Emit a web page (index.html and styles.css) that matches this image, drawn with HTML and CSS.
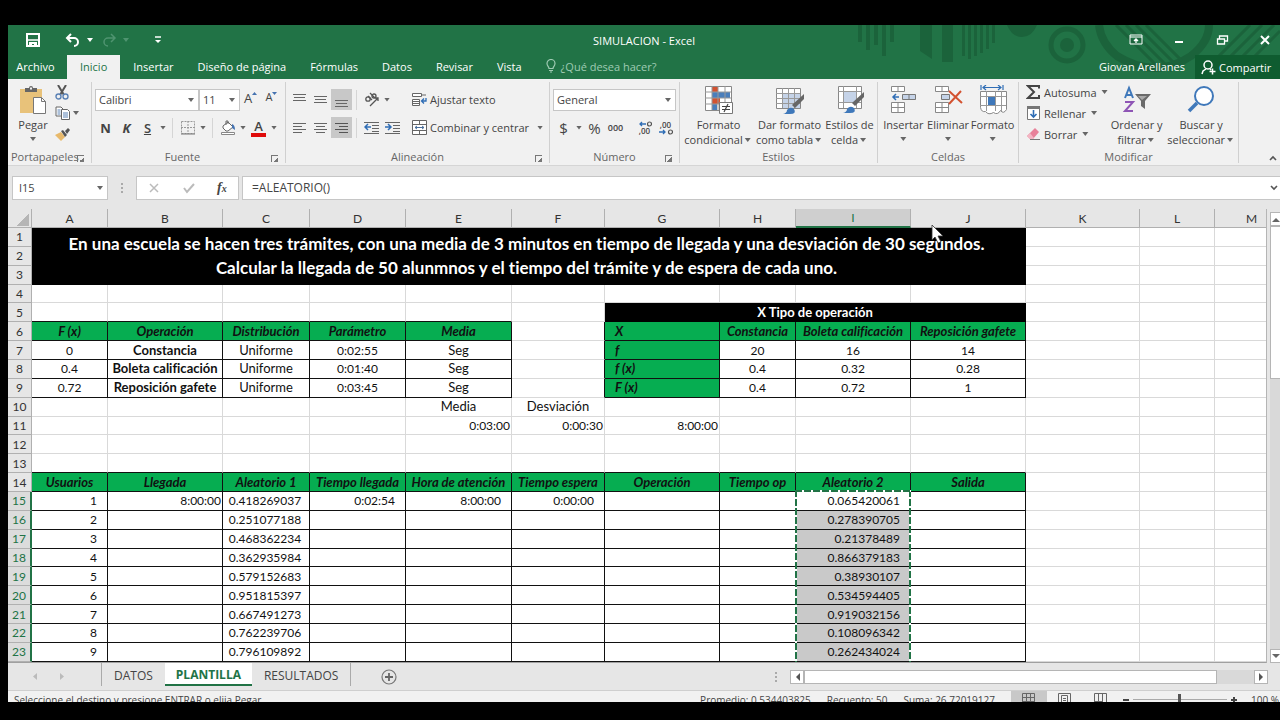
FILE: index.html
```html
<!DOCTYPE html>
<html lang="es">

<head>
  <meta charset="UTF-8">
  <meta name="viewport" content="width=device-width, initial-scale=1.0">
  <title>SIMULACION - Excel</title>
  <link rel="stylesheet" href="styles.css">
</head>

<body>
  <div class="app">

    <header class="top">
      <svg class="pattern" width="430" height="54" viewBox="0 0 430 54">
        <g fill="#1b633b">
          <path d="M8 0h4v17h-4zM16 0h4v25h-4zM24 0h4v20h-4zM32 0h4v31h-4zM40 0h4v17h-4zM70 0h12v34l-12-8zM92 0h11v37h-11zM112 0h3v31h-3zM118 0h3v34h-3zM124 0h3v31h-3zM130 0h3v28h-3zM136 0h3v24h-3zM142 0h3v18h-3z" />
          <path d="M157 0h30q-5 12-15 12t-15-12z" />
          <circle cx="217" cy="20" r="7" />
        </g>
        <g fill="none" stroke="#1b633b">
          <circle cx="217" cy="20" r="16" stroke-width="5" />
          <path d="M249 0q2 18 18 31q38 24 74 0q18-14 18-31" stroke-width="8" />
          <path d="M266 0l46 46M276 0l46 46M286 0l42 42M296 0l36 36M380 32l32-32M392 32l32-32M404 32l26-26M368 32l32-32" stroke-width="3" />
        </g>
      </svg>

      <div class="titlebar">
        <div class="quick">
          <button class="save" aria-label="Guardar"><svg width="14" height="14" viewBox="0 0 14 14"><path d="M1 1h12v12H1z" fill="none" stroke="#fff" stroke-width="2" /><path d="M2 7h10" stroke="#fff" stroke-width="1.5" /><path d="M3 9h8v4H8v-2H6v2H3z" fill="#fff" /></svg></button>
          <button aria-label="Deshacer"><svg width="16" height="14" viewBox="0 0 16 14"><path d="M6 1L2 5l4 4M2 5h7a4 4 0 0 1 0 8" fill="none" stroke="#fff" stroke-width="2" /></svg></button>
          <span class="caret white"></span>
          <button class="redo" aria-label="Rehacer"><svg width="16" height="14" viewBox="0 0 16 14"><path d="M10 1l4 4-4 4M14 5H7a4 4 0 0 0 0 8" fill="none" stroke="#4f9470" stroke-width="1.5" /></svg></button>
          <span class="caret faded"></span>
          <button class="more" aria-label="Personalizar"><svg width="6" height="8" viewBox="0 0 6 8"><path d="M0 1h6" stroke="#fff" stroke-width="1.5" /><path d="M0 4h6L3 7z" fill="#fff" /></svg></button>
        </div>
        <div class="doc-title">SIMULACION - Excel</div>
        <div class="window-buttons">
          <button aria-label="Opciones de cinta"><svg width="14" height="12" viewBox="0 0 14 12"><path d="M1 1h12v9H1zM1 3h12" fill="none" stroke="#fff" /><path d="M7 9V5M5 7l2-2 2 2" fill="none" stroke="#fff" stroke-width="1.3" /></svg></button>
          <button aria-label="Minimizar"><svg width="14" height="12" viewBox="0 0 14 12"><path d="M3 8h8" stroke="#fff" stroke-width="2" /></svg></button>
          <button aria-label="Restaurar"><svg width="14" height="12" viewBox="0 0 14 12"><path d="M2.500 5h7v5h-7zM4.500 5V2h8v5h-3" fill="none" stroke="#fff" stroke-width="1.3" /></svg></button>
          <button aria-label="Cerrar"><svg width="14" height="12" viewBox="0 0 14 12"><path d="M3 2l8 8M11 2l-8 8" stroke="#fff" stroke-width="2" /></svg></button>
        </div>
      </div>

      <nav class="tabs">
        <button class="tab file">Archivo</button>
        <button class="tab active">Inicio</button>
        <button class="tab">Insertar</button>
        <button class="tab">Diseño de página</button>
        <button class="tab">Fórmulas</button>
        <button class="tab">Datos</button>
        <button class="tab">Revisar</button>
        <button class="tab">Vista</button>
        <button class="tab tell"><svg width="10" height="14" viewBox="0 0 10 14"><path d="M3 9.500C3 7.500 1 7 1 4.500a4 4 0 0 1 8 0C9 7 7 7.500 7 9.500zM3 11.500h4M4 13h2" fill="none" stroke="#9fcbb3" stroke-width="1.2" /></svg>¿Qué desea hacer?</button>
        <span class="user">Giovan Arellanes</span>
        <button class="share"><svg width="15" height="15" viewBox="0 0 15 15"><circle cx="7" cy="5" r="4" fill="none" stroke="#fff" stroke-width="1.5" /><path d="M1 14l1-3 3-2M9 9l1 1M11.500 8.500v6M8.500 11.500h6" fill="none" stroke="#fff" stroke-width="1.5" /></svg>Compartir</button>
      </nav>
    </header>

    <section class="ribbon">
      <div class="group clipboard">
        <div class="tools">
          <button class="big paste">
            <svg width="28" height="30" viewBox="0 0 28 30"><path d="M1 4h22v24H1z" fill="#e8c27a" /><path d="M6 7V3h4a2 2 0 0 1 4 0h4v4z" fill="#666" /><path d="M11 2.500h2v2h-2z" fill="#f1f1f1" /><path d="M14.500 12.500h8l4 4v12h-12z" fill="#fff" stroke="#777" /><path d="M22.500 12.500v4h4" fill="none" stroke="#777" /></svg>
            Pegar<span class="caret"></span>
          </button>
          <div class="stack">
            <button aria-label="Cortar"><svg width="14" height="15" viewBox="0 0 14 15"><path d="M3 0l6 10M11 0L5 10" stroke="#555" stroke-width="2" /><circle cx="3.500" cy="11.500" r="2.500" fill="none" stroke="#5b82b5" stroke-width="1.400" /><circle cx="10.500" cy="11.500" r="2.500" fill="none" stroke="#5b82b5" stroke-width="1.400" /></svg></button>
            <button aria-label="Copiar"><svg width="16" height="14" viewBox="0 0 16 14"><path d="M1 1h5l2 2v7H1z" fill="#fff" stroke="#666" /><path d="M2.500 4h3M2.500 6h3M2.500 8h3" stroke="#5b82b5" /><path d="M6.500 3.500h6l2 2v8h-8z" fill="#fff" stroke="#666" /><path d="M8 7h5M8 9h5M8 11h5" stroke="#5b82b5" /></svg><span class="caret"></span></button>
            <button aria-label="Copiar formato"><svg width="15" height="13" viewBox="0 0 15 13"><path d="M0 7l6-3 4 5-4 4z" fill="#e8b96b" /><path d="M6 3l2-1 4 5-2 2zM10 3l3-3 2 2-3 4z" fill="#555" /></svg></button>
          </div>
        </div>
        <div class="group-name">Portapapeles<i class="launcher"></i></div>
      </div>

      <div class="group font">
        <div class="tools rows">
          <div class="row">
            <select class="pick family" aria-label="Fuente"><option>Calibri</option></select>
            <select class="pick size" aria-label="Tamaño"><option>11</option></select>
            <button class="tool grow" aria-label="Aumentar">A<svg width="5" height="4" viewBox="0 0 5 4"><path d="M0 3l2.500-3L5 3z" fill="#4472b0" /></svg></button>
            <button class="tool shrink" aria-label="Disminuir">A<svg width="5" height="4" viewBox="0 0 5 4"><path d="M0 0h5L2.500 3z" fill="#4472b0" /></svg></button>
          </div>
          <div class="row">
            <button class="tool bold">N</button>
            <button class="tool italic">K</button>
            <button class="tool under">S</button>
            <span class="caret"></span><i class="sep"></i>
            <button class="tool" aria-label="Bordes"><svg width="14" height="14" viewBox="0 0 14 14"><path d="M.5.5h13v12H.5zM7 0v13M0 6.500h14" fill="none" stroke="#999" stroke-dasharray="2 1" /><path d="M0 13h14" stroke="#777" /></svg></button>
            <span class="caret"></span><i class="sep"></i>
            <button class="tool" aria-label="Relleno"><svg width="16" height="15" viewBox="0 0 16 15"><path d="M3 6l5-4 5 5-5 4H6L3 8z" fill="#fff" stroke="#666" /><path d="M6 5V1h2v3" fill="none" stroke="#666" /><path d="M12 4q3 1 3 6l-3-2z" fill="#4472b0" /><path d="M1.500 12.500h13v2h-13z" fill="#fff" stroke="#888" /></svg></button>
            <span class="caret"></span>
            <button class="tool color">A</button>
            <span class="caret"></span>
          </div>
        </div>
        <div class="group-name">Fuente<i class="launcher"></i></div>
      </div>

      <div class="group align">
        <div class="tools">
          <div class="rows">
            <div class="row">
              <button class="tool" aria-label="Arriba"><svg width="13" height="14" viewBox="0 0 13 14"><path d="M0 1.500h13M1 4.500h11M0 7.500h13" stroke="#666" /></svg></button>
              <button class="tool" aria-label="Medio"><svg width="13" height="14" viewBox="0 0 13 14"><path d="M0 3.500h13M1 6.500h11M0 9.500h13" stroke="#666" /></svg></button>
              <button class="tool on" aria-label="Abajo"><svg width="13" height="14" viewBox="0 0 13 14"><path d="M0 7.500h13M1 10.500h11M0 13.500h13" stroke="#666" /></svg></button>
              <i class="sep"></i>
              <button class="tool" aria-label="Orientación"><svg width="16" height="15" viewBox="0 0 16 15"><g fill="none" stroke="#555" stroke-width="1.300"><circle cx="4" cy="7" r="2.200" /><path d="M4 4l4 4" /><path d="M6 1l5 5" /><circle cx="10" cy="4" r="2" /><path d="M6 14l8-8M11 6h3v3" /></g></svg></button>
              <span class="caret"></span>
            </div>
            <div class="row">
              <button class="tool" aria-label="Izquierda"><svg width="13" height="12" viewBox="0 0 13 12"><path d="M0 1.500h13M0 4.500h9M0 7.500h13M0 10.500h9" stroke="#666" /></svg></button>
              <button class="tool" aria-label="Centrar"><svg width="13" height="12" viewBox="0 0 13 12"><path d="M0 1.500h13M2 4.500h9M0 7.500h13M2 10.500h9" stroke="#666" /></svg></button>
              <button class="tool on" aria-label="Derecha"><svg width="13" height="12" viewBox="0 0 13 12"><path d="M0 1.500h13M4 4.500h9M0 7.500h13M4 10.500h9" stroke="#555" /></svg></button>
              <i class="sep"></i>
              <button class="tool" aria-label="Reducir sangría"><svg width="15" height="14" viewBox="0 0 15 14"><path d="M0 1.500h15M8 4.500h7M8 7.500h7M8 10.500h7M0 12.500h15" stroke="#666" /><path d="M7 6H1M4 3L1 6l3 3" fill="none" stroke="#2f6db5" stroke-width="1.500" /></svg></button>
              <button class="tool" aria-label="Aumentar sangría"><svg width="15" height="14" viewBox="0 0 15 14"><path d="M0 1.500h15M8 4.500h7M8 7.500h7M8 10.500h7M0 12.500h15" stroke="#666" /><path d="M0 6h6M3 3l3 3-3 3" fill="none" stroke="#2f6db5" stroke-width="1.500" /></svg></button>
            </div>
          </div>
          <div class="rows wide">
            <button class="row text-tool"><svg width="15" height="14" viewBox="0 0 15 14"><path d="M.5.5h9v3h-9z" fill="#fff" stroke="#666" /><path d="M9 2h5" stroke="#666" /><path d="M.5 6.500h7v6h-7z" fill="#fff" stroke="#666" /><path d="M1 8.500h6M1 10.500h6" stroke="#666" /><path d="M14 5v3H10M12 5.500L9.500 8 12 10.500" fill="none" stroke="#2f6db5" stroke-width="1.300" /></svg>Ajustar texto</button>
            <button class="row text-tool"><svg width="15" height="15" viewBox="0 0 15 15"><path d="M.5.5h14v14H.5zM0 4.500h15M0 10.500h15M7.500 0v4M7.500 11v4" fill="#fff" stroke="#666" /><path d="M3 7.500h9M5 6L3 7.500 5 9M10 6l2 1.500L10 9" fill="none" stroke="#4a6f9c" /></svg>Combinar y centrar<span class="caret"></span></button>
          </div>
        </div>
        <div class="group-name">Alineación<i class="launcher"></i></div>
      </div>

      <div class="group number">
        <div class="tools rows">
          <div class="row"><select class="pick format" aria-label="Formato de número"><option>General</option></select></div>
          <div class="row">
            <button class="tool money">$</button><span class="caret"></span>
            <button class="tool money">%</button>
            <button class="tool zeros">000</button>
            <i class="sep"></i>
            <button class="tool dec" aria-label="Aumentar decimales"><svg width="14" height="6" viewBox="0 0 14 6"><path d="M8 3H2M4 1L2 3l2 2" fill="none" stroke="#2f6db5" stroke-width="1.300" /><circle cx="11.500" cy="3" r="2" fill="none" stroke="#555" stroke-width="1.200" /></svg><span>,00</span></button>
            <button class="tool dec" aria-label="Disminuir decimales"><span>,00</span><svg width="14" height="6" viewBox="0 0 14 6"><path d="M0 3h6M4 1l2 2-2 2" fill="none" stroke="#2f6db5" stroke-width="1.300" /><circle cx="11.500" cy="3" r="2" fill="none" stroke="#555" stroke-width="1.200" /></svg></button>
          </div>
        </div>
        <div class="group-name">Número<i class="launcher"></i></div>
      </div>

      <div class="group styles">
        <div class="tools">
          <button class="big">
            <svg width="30" height="30" viewBox="0 0 30 30"><path d="M1.500 1.500h26v24h-26z" fill="#fff" stroke="#888" /><path d="M8 2h6v5H8zM8 13h8v6H8z" fill="#d35230" /><path d="M8 7h18v6H8zM8 19h5v6H8z" fill="#4a7ebb" /><path d="M8 1v24M14 1v24M21 1v24M1 7h26M1 13h26M1 19h26" fill="none" stroke="#999" /><path d="M15.500 17.500h13v11h-13z" fill="#fff" stroke="#777" /><path d="M18 21.500h8M18 24.500h8M24 19l-4 8" stroke="#444" stroke-width="1.200" /></svg>
            <span>Formato<br>condicional<i class="caret"></i></span>
          </button>
          <button class="big">
            <svg width="30" height="30" viewBox="0 0 30 30"><path d="M1.500 3.500h24v20h-24z" fill="#fff" stroke="#888" /><path d="M8 8h17v15H8z" fill="#c5d3e8" /><path d="M7.500 3v20M13.500 3v20M19.500 3v20M1 8.500h24M1 13.500h24M1 18.500h24" stroke="#999" /><path d="M29 9v5l-9 9-3-3z" fill="#666" /><path d="M8 29q4-1 4-4 3-4 7-1 3 5-4 5z" fill="#3f78ba" /></svg>
            <span>Dar formato<br>como tabla<i class="caret"></i></span>
          </button>
          <button class="big narrow">
            <svg width="30" height="30" viewBox="0 0 30 30"><path d="M3.500 1.500h23v22h-23z" fill="#fff" stroke="#888" /><path d="M8.500 6.500h13v11h-13z" fill="#c5d3e8" stroke="#999" /><path d="M8.500 1v22M21.500 1v22M3 6.500h23M3 17.500h23" stroke="#999" /><path d="M29 7v5l-9 9-3-3z" fill="#666" /><path d="M8 28q4-1 4-4 3-4 7-1 3 5-4 5z" fill="#3f78ba" /></svg>
            <span>Estilos de<br>celda<i class="caret"></i></span>
          </button>
        </div>
        <div class="group-name">Estilos</div>
      </div>

      <div class="group cells">
        <div class="tools">
          <button class="big">
            <svg width="28" height="30" viewBox="0 0 28 30"><path d="M2.500 1.500h13v5h-13zM9 1v5M2.500 17.500h13v10h-13zM9 17v10M2 22.500h13" fill="#fff" stroke="#888" /><path d="M13.500 9.500h13v5h-13zM20 9v5" fill="#c5d3e8" stroke="#777" /><path d="M10 12H4M7 9l-3 3 3 3" fill="none" stroke="#2f6db5" stroke-width="1.500" /></svg>
            Insertar<span class="caret"></span>
          </button>
          <button class="big">
            <svg width="30" height="30" viewBox="0 0 30 30"><path d="M2.500 1.500h13v5h-13zM9 1v5M2.500 17.500h13v10h-13zM9 17v10M2 22.500h13" fill="#fff" stroke="#888" /><path d="M8.500 9.500h8v5h-8z" fill="#c5d3e8" stroke="#777" /><path d="M16 6l13 12M28 6L16 19" stroke="#d35230" stroke-width="2" /></svg>
            Eliminar<span class="caret"></span>
          </button>
          <button class="big">
            <svg width="30" height="30" viewBox="0 0 30 30"><path d="M3 0v5M25 0v5M5 2.500h18M8 0L5 2.500 8 5M20 0l3 2.500L20 5" fill="none" stroke="#2f6db5" stroke-width="1.200" /><path d="M2.500 6.500h26v18q-3 5-6 1-3 5-7 2-5 3-8-1-4 1-5-4z" fill="#fff" stroke="#888" /><path d="M8.500 6v20M17.500 6v20M23.500 6v20M2 11.500h26M2 20.500h26" stroke="#999" /><path d="M10 12h7v8h-7z" fill="#3f78ba" /></svg>
            Formato<span class="caret"></span>
          </button>
        </div>
        <div class="group-name">Celdas</div>
      </div>

      <div class="group edit">
        <div class="tools">
          <div class="stack lines">
            <button class="auto"><svg width="15" height="14" viewBox="0 0 15 14"><path d="M13 3.500V1H2l6 6-6 6h11v-3" fill="none" stroke="#444" stroke-width="2" /></svg>Autosuma<span class="caret"></span></button>
            <button><svg width="15" height="14" viewBox="0 0 15 14"><path d="M1.500.5h12v13h-12z" fill="#fff" stroke="#777" /><path d="M1 0h13v3H1z" fill="#777" /><path d="M7.500 4v7M4.500 8l3 3 3-3" fill="none" stroke="#2f6db5" stroke-width="1.600" /></svg>Rellenar<span class="caret"></span></button>
            <button><svg width="15" height="14" viewBox="0 0 15 14"><path d="M1 9l8-8 4 4-6 7H4z" fill="#e8819a" /><path d="M1 9l3-3 4 5-1 1H4z" fill="#f3b5c3" /><path d="M4 12.500h10" stroke="#777" /></svg>Borrar<span class="caret"></span></button>
          </div>
          <button class="big">
            <svg width="30" height="30" viewBox="0 0 30 30"><path d="M3 13L7 3l4 10M4 10h6" fill="none" stroke="#3f78ba" stroke-width="2" /><path d="M3 17h8L3 26h8" fill="none" stroke="#8e55b5" stroke-width="2" /><path d="M13 9h16l-6 7v8l-4-3v-5z" fill="#6b6b6b" /><path d="M16 11h9l-5 4z" fill="#aaa" /></svg>
            <span>Ordenar y<br>filtrar<i class="caret"></i></span>
          </button>
          <button class="big">
            <svg width="30" height="30" viewBox="0 0 30 30"><circle cx="18" cy="11" r="9" fill="#fff" stroke="#3f78ba" stroke-width="2" /><path d="M11 18L3 26" stroke="#3f78ba" stroke-width="3.500" /></svg>
            <span>Buscar y<br>seleccionar<i class="caret"></i></span>
          </button>
        </div>
        <div class="group-name">Modificar</div>
      </div>
      <button class="collapse" aria-label="Contraer"><svg width="8" height="6" viewBox="0 0 8 6"><path d="M1 5l3-3 3 3" fill="none" stroke="#555" stroke-width="1.600" /></svg></button>
    </section>

    <section class="formula-bar">
      <select class="pick name-box" aria-label="Cuadro de nombres"><option>I15</option></select>
      <i class="dots"></i>
      <div class="fx-box">
        <button aria-label="Cancelar"><svg width="12" height="12" viewBox="0 0 12 12"><path d="M2 2l8 8M10 2l-8 8" stroke="#bbb" stroke-width="1.500" /></svg></button>
        <button aria-label="Introducir"><svg width="12" height="12" viewBox="0 0 12 12"><path d="M1 6l3 4 7-8" fill="none" stroke="#bbb" stroke-width="2" /></svg></button>
        <button class="fx">f<sub>x</sub></button>
      </div>
      <input class="formula" type="text" value="=ALEATORIO()" aria-label="Fórmula">
      <button class="expand" aria-label="Expandir"><svg width="8" height="6" viewBox="0 0 8 6"><path d="M1 1l3 3 3-3" fill="none" stroke="#555" stroke-width="1.600" /></svg></button>
    </section>

    <main class="sheet">
      <div class="grid">
        <table>
          <colgroup>
            <col class="w24"><col class="w76"><col class="w115"><col class="w87"><col class="w96"><col class="w106"><col class="w93">
            <col class="w115"><col class="w76"><col class="w115"><col class="w115"><col class="w114"><col class="w75"><col>
          </colgroup>
          <thead>
            <tr><th class="corner"></th><th>A</th><th>B</th><th>C</th><th>D</th><th>E</th><th>F</th><th>G</th><th>H</th><th class="current">I</th><th>J</th><th>K</th><th>L</th><th class="last">M</th></tr>
          </thead>
          <tbody>
            <tr><th>1</th><td class="banner" colspan="10" rowspan="3">En una escuela se hacen tres trámites, con una media de 3 minutos en tiempo de llegada y una desviación de 30 segundos.<br>Calcular la llegada de 50 alunmnos y el tiempo del trámite y de espera de cada uno.</td><td></td><td></td><td></td></tr>
            <tr><th>2</th><td></td><td></td><td></td></tr>
            <tr><th>3</th><td></td><td></td><td></td></tr>
            <tr><th>4</th><td></td><td></td><td></td><td></td><td></td><td></td><td></td><td></td><td></td><td></td><td></td><td></td><td></td></tr>
            <tr class="above"><th>5</th><td></td><td></td><td></td><td></td><td></td><td></td><td class="black" colspan="4">X Tipo de operación</td><td></td><td></td><td></td></tr>
            <tr class="ops"><th>6</th><td class="head">F (x)</td><td class="head">Operación</td><td class="head">Distribución</td><td class="head">Parámetro</td><td class="head">Media</td><td></td><td class="head left">X</td><td class="head">Constancia</td><td class="head">Boleta calificación</td><td class="head">Reposición gafete</td><td></td><td></td><td></td></tr>
            <tr class="ops"><th>7</th><td>0</td><td class="strong">Constancia</td><td class="word">Uniforme</td><td>0:02:55</td><td class="word">Seg</td><td></td><td class="head left">f</td><td>20</td><td>16</td><td>14</td><td></td><td></td><td></td></tr>
            <tr class="ops"><th>8</th><td>0.4</td><td class="strong">Boleta calificación</td><td class="word">Uniforme</td><td>0:01:40</td><td class="word">Seg</td><td></td><td class="head left">f (x)</td><td>0.4</td><td>0.32</td><td>0.28</td><td></td><td></td><td></td></tr>
            <tr class="ops"><th>9</th><td>0.72</td><td class="strong">Reposición gafete</td><td class="word">Uniforme</td><td>0:03:45</td><td class="word">Seg</td><td></td><td class="head left">F (x)</td><td>0.4</td><td>0.72</td><td>1</td><td></td><td></td><td></td></tr>
            <tr><th>10</th><td></td><td></td><td></td><td></td><td class="word">Media</td><td class="word">Desviación</td><td></td><td></td><td></td><td></td><td></td><td></td><td></td></tr>
            <tr><th>11</th><td></td><td></td><td></td><td></td><td class="num">0:03:00</td><td class="num">0:00:30</td><td class="num">8:00:00</td><td></td><td></td><td></td><td></td><td></td><td></td></tr>
            <tr><th>12</th><td></td><td></td><td></td><td></td><td></td><td></td><td></td><td></td><td></td><td></td><td></td><td></td><td></td></tr>
            <tr class="above-data"><th>13</th><td></td><td></td><td></td><td></td><td></td><td></td><td></td><td></td><td></td><td></td><td></td><td></td><td></td></tr>
            <tr class="users"><th>14</th><td class="head">Usuarios</td><td class="head">Llegada</td><td class="head">Aleatorio 1</td><td class="head">Tiempo llegada</td><td class="head">Hora de atención</td><td class="head">Tiempo espera</td><td class="head">Operación</td><td class="head">Tiempo op</td><td class="head">Aleatorio 2</td><td class="head">Salida</td><td></td><td></td><td></td></tr>
            <tr class="users data"><th>15</th><td>1</td><td class="num">8:00:00</td><td>0.418269037</td><td>0:02:54</td><td>8:00:00</td><td>0:00:00</td><td></td><td></td><td class="first">0.065420061<i class="ants"></i></td><td></td><td></td><td></td><td></td></tr>
            <tr class="users data"><th>16</th><td>2</td><td></td><td>0.251077188</td><td></td><td></td><td></td><td></td><td></td><td>0.278390705</td><td></td><td></td><td></td><td></td></tr>
            <tr class="users data"><th>17</th><td>3</td><td></td><td>0.468362234</td><td></td><td></td><td></td><td></td><td></td><td>0.21378489</td><td></td><td></td><td></td><td></td></tr>
            <tr class="users data"><th>18</th><td>4</td><td></td><td>0.362935984</td><td></td><td></td><td></td><td></td><td></td><td>0.866379183</td><td></td><td></td><td></td><td></td></tr>
            <tr class="users data"><th>19</th><td>5</td><td></td><td>0.579152683</td><td></td><td></td><td></td><td></td><td></td><td>0.38930107</td><td></td><td></td><td></td><td></td></tr>
            <tr class="users data"><th>20</th><td>6</td><td></td><td>0.951815397</td><td></td><td></td><td></td><td></td><td></td><td>0.534594405</td><td></td><td></td><td></td><td></td></tr>
            <tr class="users data"><th>21</th><td>7</td><td></td><td>0.667491273</td><td></td><td></td><td></td><td></td><td></td><td>0.919032156</td><td></td><td></td><td></td><td></td></tr>
            <tr class="users data"><th>22</th><td>8</td><td></td><td>0.762239706</td><td></td><td></td><td></td><td></td><td></td><td>0.108096342</td><td></td><td></td><td></td><td></td></tr>
            <tr class="users data"><th>23</th><td>9</td><td></td><td>0.796109892</td><td></td><td></td><td></td><td></td><td></td><td>0.262434024</td><td></td><td></td><td></td><td></td></tr>
          </tbody>
        </table>
      </div>
      <div class="vscroll">
        <button aria-label="Subir"><svg width="8" height="5" viewBox="0 0 8 5"><path d="M0 5l4-4 4 4z" fill="#666" /></svg></button>
        <div class="thumb"></div>
        <div class="track"></div>
        <button aria-label="Bajar"><svg width="8" height="5" viewBox="0 0 8 5"><path d="M0 0h8L4 4z" fill="#666" /></svg></button>
      </div>
      <svg class="cursor" width="13" height="19" viewBox="0 0 13 19"><path d="M1 1v15l3-3 3 6 3-1-3-6h5z" fill="#fff" stroke="#333" stroke-width=".8" /></svg>
    </main>

    <div class="bottom">
      <div class="arrows">
        <svg width="5" height="7" viewBox="0 0 5 7"><path d="M4 0v7L0 3.500z" fill="#bbb" /></svg>
        <svg width="5" height="7" viewBox="0 0 5 7"><path d="M0 0v7l4-3.500z" fill="#bbb" /></svg>
      </div>
      <div class="sheets">
        <button>DATOS</button>
        <button class="selected">PLANTILLA</button>
        <button>RESULTADOS</button>
      </div>
      <button class="add" aria-label="Hoja nueva"><svg width="16" height="16" viewBox="0 0 16 16"><circle cx="8" cy="8" r="7" fill="none" stroke="#777" stroke-width="1.200" /><path d="M8 4v8M4 8h8" stroke="#666" stroke-width="1.800" /></svg></button>
      <i class="dots"></i>
      <div class="hscroll">
        <button aria-label="Izquierda"><svg width="5" height="8" viewBox="0 0 5 8"><path d="M5 0v8L1 4z" fill="#555" /></svg></button>
        <div class="thumb"></div>
        <div class="track"></div>
        <button aria-label="Derecha"><svg width="5" height="8" viewBox="0 0 5 8"><path d="M0 0v8l4-4z" fill="#555" /></svg></button>
      </div>
    </div>

    <footer class="status">
      <span class="hint">Seleccione el destino y presione ENTRAR o elija Pegar</span>
      <span>Promedio: 0.534403825</span>
      <span>Recuento: 50</span>
      <span>Suma: 26.72019127</span>
      <div class="view-tools">
        <button class="view on" aria-label="Normal"><svg width="13" height="13" viewBox="0 0 13 13"><path d="M.5.5h12v12H.5zM4.500 0v13M8.500 0v13M0 4.500h13M0 8.500h13" fill="none" stroke="#666" /></svg></button>
        <button class="view" aria-label="Diseño de página"><svg width="13" height="13" viewBox="0 0 13 13"><path d="M.5.5h12v12H.5zM3.500 2.500h6v10h-6zM5 5.500h3M5 7.500h3M5 9.500h3" fill="none" stroke="#666" /></svg></button>
        <button class="view" aria-label="Salto de página"><svg width="13" height="13" viewBox="0 0 13 13"><path d="M.5.5h12v12H.5zM4.500 0v8M8.500 0v8M0 8.500h9" fill="none" stroke="#666" /></svg></button>
        <button class="step" aria-label="Alejar"><svg width="8" height="8" viewBox="0 0 8 8"><path d="M1 4h6" stroke="#444" stroke-width="2" /></svg></button>
        <input class="zoom" type="range" min="0" max="100" value="50" aria-label="Zoom">
        <button class="step" aria-label="Acercar"><svg width="8" height="8" viewBox="0 0 8 8"><path d="M1 4h6M4 1v6" stroke="#444" stroke-width="2" /></svg></button>
        <span class="percent">100 %</span>
      </div>
    </footer>

  </div>
</body>

</html>
```
FILE: styles.css
```css
* {
  box-sizing: border-box;
}

body {
  margin: 0;
  padding: 25px 0 18px 8px;
  height: 100vh;
  background: #000;
  font-family: "Open Sans", "Noto Sans", sans-serif;
  font-size: 11px;
  color: #444;
  overflow: hidden;
}

button,
select,
input {
  font: inherit;
  color: inherit;
  background: none;
  border: none;
  border-radius: 0;
  padding: 0;
  margin: 0;
}

svg {
  display: block;
  flex: none;
}

.app {
  height: 100%;
  display: flex;
  flex-direction: column;
  background: #e6e6e6;
  overflow: hidden;
}

.caret {
  flex: none;
  display: inline-block;
  width: 10px;
  height: 4px;
  background: #666;
  clip-path: polygon(20% 0, 80% 0, 50% 100%);
}

.caret.white {
  background: #fff;
}

.caret.faded {
  background: #4f9470;
}

/* title bar and tabs */
.top {
  position: relative;
  flex: none;
  background: #217346;
  color: #fff;
}

.pattern {
  position: absolute;
  top: 0;
  right: 0;
}

.titlebar {
  position: relative;
  display: grid;
  grid-template-columns: 1fr auto 1fr;
  align-items: center;
  height: 30px;
}

.quick {
  display: flex;
  align-items: center;
  padding-left: 18px;
}

.save {
  margin-right: 25px;
}

.quick .caret {
  margin: 0 4px;
}

.redo {
  margin-left: 2px;
}

.more {
  margin-left: 20px;
}

.doc-title {
  font-size: 11px;
}

.window-buttons {
  display: flex;
  justify-content: flex-end;
  gap: 29px;
  padding-right: 8px;
}

.tabs {
  position: relative;
  display: flex;
  height: 24px;
}

.tab {
  padding: 0 12px 2px;
}

.file {
  width: 59px;
  padding: 0 4px 2px 0;
}

.tab.active {
  padding: 0 13px 2px;
  margin-right: 1px;
  background: #f1f1f1;
  color: #217346;
}

.tell {
  display: flex;
  align-items: center;
  gap: 5px;
  color: #9fcbb3;
}

.user {
  margin-left: auto;
  padding-right: 10px;
  line-height: 24px;
}

.share {
  display: flex;
  align-items: center;
  gap: 3px;
  width: 85px;
  padding-left: 6px;
  background: #0f5c30;
}

/* ribbon */
.ribbon {
  flex: none;
  display: flex;
  height: 87px;
  padding-top: 3px;
  background: #f1f1f1;
  border-bottom: 1px solid #d5d5d5;
}

.group {
  flex: none;
  display: flex;
  flex-direction: column;
  padding: 0 3px;
  margin-bottom: 2px;
  border-right: 1px solid #d0d0d0;
}

.clipboard {
  width: 84px;
}

.font {
  width: 194px;
}

.align {
  width: 264px;
}

.number {
  width: 130px;
}

.styles {
  width: 198px;
}

.cells {
  width: 141px;
}

.edit {
  width: 220px;
}

.tools {
  flex: 1;
  display: flex;
}

.rows {
  display: flex;
  flex-direction: column;
  gap: 7px;
  padding-top: 7px;
}

.row {
  display: flex;
  align-items: center;
  height: 21px;
}

.group-name {
  position: relative;
  text-align: center;
  line-height: 12px;
  color: #666;
}

.clipboard .group-name {
  padding-right: 14px;
}

.font .group-name {
  padding-right: 12px;
}

.launcher {
  position: absolute;
  right: 4px;
  bottom: 1px;
  width: 7px;
  height: 7px;
  border-top: 1px solid #777;
  border-left: 1px solid #777;
  background: linear-gradient(135deg, transparent 50%, #777 50%) right bottom / 5px 5px no-repeat;
}

.big {
  flex: 1 1 70px;
  display: flex;
  flex-direction: column;
  align-items: center;
  padding-top: 3px;
  line-height: 15px;
  white-space: nowrap;
}

.big svg {
  margin-bottom: 2px;
}

.big > .caret {
  margin-top: 5px;
}

.big span .caret {
  margin-bottom: 2px;
}

.narrow {
  flex-basis: 48px;
}

.paste {
  flex: 0 0 44px;
}

.stack {
  display: flex;
  flex-direction: column;
  gap: 7px;
  padding-top: 3px;
}

.stack button {
  display: flex;
  align-items: center;
  height: 14px;
}

.lines {
  width: 84px;
  padding-left: 4px;
}

.lines button {
  gap: 3px;
}

.auto .caret {
  margin-left: auto;
}

.tool {
  flex: none;
  width: 21px;
  height: 21px;
  display: flex;
  justify-content: center;
  align-items: center;
  font-size: 13px;
}

.tool.on {
  background: #c8c8c8;
}

.sep {
  width: 1px;
  height: 20px;
  margin: 0 4px;
  background: #d5d5d5;
}

.pick {
  appearance: none;
  height: 22px;
  padding: 0 3px;
  border: 1px solid #c6c6c6;
  background: #fff url("data:image/svg+xml,%3Csvg xmlns='http://www.w3.org/2000/svg' width='6' height='4'%3E%3Cpath d='M0 0h6L3 4z' fill='%23666'/%3E%3C/svg%3E") no-repeat right 4px center;
}

.family {
  width: 104px;
}

.size {
  width: 41px;
}

.format {
  width: 123px;
}

.grow,
.shrink {
  align-items: baseline;
}

.grow svg,
.shrink svg {
  align-self: flex-start;
  margin-top: 3px;
}

.shrink {
  font-size: 11px;
}

.bold {
  font-weight: 700;
}

.italic {
  font-style: italic;
  font-weight: 700;
}

.under {
  font-weight: 600;
  text-decoration: underline;
}

.color {
  width: 15px;
  height: 18px;
  margin: 0 3px;
  line-height: 14px;
  font-weight: 600;
  border-bottom: 4px solid #e00b0b;
}

.money {
  font-size: 15px;
}

.zeros {
  font-size: 9px;
  font-weight: 600;
}

.dec {
  flex-direction: column;
  font-size: 8px;
  line-height: 8px;
  font-weight: 600;
}

.wide {
  padding-left: 9px;
}

.text-tool {
  gap: 3px;
}

.text-tool .caret {
  margin-left: 3px;
}

.collapse {
  align-self: flex-end;
  margin: 0 3px 4px auto;
}

/* formula bar */
.formula-bar {
  flex: none;
  display: flex;
  align-items: center;
  height: 43px;
  padding-left: 4px;
}

.name-box {
  width: 96px;
  height: 24px;
  padding-left: 6px;
}

.dots {
  width: 2px;
  height: 10px;
  margin: 0 13px;
  background: repeating-linear-gradient(#aaa 0 2px, transparent 2px 4px);
}

.fx-box {
  display: flex;
  justify-content: space-around;
  align-items: center;
  width: 103px;
  height: 24px;
  margin-right: 3px;
  background: #fff;
  border: 1px solid #c6c6c6;
}

.fx {
  font: italic 700 14px "Liberation Serif", serif;
}

.fx sub {
  font-size: 10px;
  vertical-align: baseline;
}

.formula {
  flex: 1;
  height: 24px;
  padding-left: 9px;
  font-size: 12px;
  background: #fff;
  border: 1px solid #c6c6c6;
  border-right: none;
}

.expand {
  height: 24px;
  padding: 0 2px;
  background: #fff;
  border: solid #c6c6c6;
  border-width: 1px 0;
}

/* worksheet */
.sheet {
  position: relative;
  flex: 1;
  min-height: 0;
  display: flex;
  gap: 3px;
}

.grid {
  flex: 1;
  overflow: hidden;
  border-right: 1px solid #b5b5b5;
  border-bottom: 1px solid #a0a0a0;
}

table {
  width: 100%;
  height: 100%;
  table-layout: fixed;
  border-collapse: separate;
  border-spacing: 0;
  font-family: Lato, "Open Sans", sans-serif;
  font-size: 12px;
  font-variant-ligatures: none;
  line-height: 17px;
  color: #111;
}

.w24 {
  width: 24px;
}

.w75 {
  width: 75px;
}

.w76 {
  width: 76px;
}

.w87 {
  width: 87px;
}

.w93 {
  width: 93px;
}

.w96 {
  width: 96px;
}

.w106 {
  width: 106px;
}

.w114 {
  width: 114px;
}

.w115 {
  width: 115px;
}

th {
  padding: 0;
  font-weight: 400;
  color: #333;
  background: #e6e6e6;
  border-right: 1px solid #b0b0b0;
  border-bottom: 1px solid #b0b0b0;
}

thead th {
  height: 19px;
}

thead .last {
  padding-left: 22px;
  border-right: none;
}

.corner {
  background: linear-gradient(135deg, transparent 50%, #b5b5b5 50%) no-repeat 9px 5px / 12px 12px;
}

.current {
  background: #cfcfcf;
  color: #217346;
  line-height: 16px;
  border-bottom: 2px solid #217346;
}

td {
  padding: 0;
  text-align: center;
  white-space: nowrap;
  background: #fff;
  border-right: 1px solid #d9d9d9;
  border-bottom: 1px solid #d9d9d9;
}

td:last-child {
  border-right: none;
}

.banner {
  font-size: 17px;
  font-weight: 700;
  line-height: 24px;
  vertical-align: top;
  padding-top: 4px;
  padding-right: 4px;
  color: #fff;
  background: #000;
  border-color: #000;
}

.black {
  font-size: 13px;
  font-weight: 700;
  color: #fff;
  background: #000;
  border-color: #000;
}

.head {
  font-size: 13px;
  font-weight: 700;
  font-style: italic;
  background: #06ad51;
}

.left {
  text-align: left;
  padding-left: 10px;
}

.strong {
  font-size: 13px;
  font-weight: 700;
}

.word {
  font-size: 13px;
}

.num {
  text-align: right;
  padding-right: 1px;
}

.above td:nth-child(-n+6),
.above-data td:nth-child(-n+11) {
  border-bottom-color: #111;
}

.above td:nth-child(7) {
  border-bottom-color: #d9d9d9;
}

.ops td:nth-child(-n+11),
.users td:nth-child(-n+11) {
  border-color: #111;
}

.ops td:nth-child(7) {
  border-bottom-color: #d9d9d9;
}

.data th {
  color: #217346;
  background: #dcdcdc;
  border-right: 2px solid #217346;
}

.data td {
  text-align: right;
  padding-right: 10px;
}

.data td.num {
  padding-right: 1px;
}

.data td:nth-child(4) {
  text-align: center;
  padding-right: 2px;
}

.data td:nth-child(10) {
  background: #c9c9c9;
}

.data td.first {
  position: relative;
  background: #fff;
}

/* copied range outline, runs past the last visible row */
.ants {
  position: absolute;
  top: -2px;
  left: -1px;
  right: -1px;
  height: 1000%;
  background:
    repeating-linear-gradient(90deg, #217346 0 7px, #fff 7px 9px) top / 100% 2px no-repeat,
    repeating-linear-gradient(#217346 0 7px, #fff 7px 9px) left / 2px 100% no-repeat,
    repeating-linear-gradient(#217346 0 7px, #fff 7px 9px) right / 2px 100% no-repeat;
}

.cursor {
  position: absolute;
  left: 923px;
  top: 15px;
}

.vscroll {
  width: 10px;
  display: flex;
  flex-direction: column;
  padding-top: 3px;
}

.vscroll button {
  height: 14px;
  padding-left: 1px;
  background: #fff;
  border: 1px solid #b5b5b5;
  border-right: none;
}

.vscroll .thumb {
  flex: 0 0 34%;
  background: #fff;
  border: 1px solid #b5b5b5;
  border-right: none;
}

.track {
  flex: 1;
  background: #d9d9d9;
}

/* sheet tabs and horizontal scroll */
.bottom {
  flex: none;
  display: flex;
  align-items: center;
  height: 27px;
  padding-right: 12px;
}

.arrows {
  display: flex;
  gap: 22px;
  width: 93px;
  padding-left: 25px;
}

.sheets {
  align-self: flex-start;
  display: flex;
  height: 23px;
  border-left: 1px solid #aaa;
  border-right: 1px solid #aaa;
  font-size: 12px;
}

.sheets button {
  padding: 2px 12px 0;
}

.sheets .selected {
  padding: 2px 11px 0;
  font-weight: 700;
  color: #217346;
  background: #fff;
  border-bottom: 2px solid #217346;
}

.add {
  margin-left: 30px;
}

.bottom .dots {
  margin-left: auto;
}

.hscroll {
  flex: 0 1 478px;
  display: flex;
  height: 14px;
}

.hscroll button {
  width: 14px;
  padding-left: 4px;
  background: #fff;
  border: 1px solid #b5b5b5;
}

.hscroll .thumb {
  flex: 11;
  background: #fff;
  border: 1px solid #b5b5b5;
}

/* status bar */
.status {
  flex: none;
  display: flex;
  align-items: center;
  gap: 16px;
  height: 18px;
  margin-bottom: -6px;
  padding: 0 1px 0 6px;
  background: #f1f1f1;
  border-top: 1px solid #cfcfcf;
  font-size: 10px;
  white-space: nowrap;
}

.hint {
  margin-right: auto;
}

.view-tools {
  display: flex;
  align-items: center;
}

.view {
  width: 36px;
  height: 17px;
  padding-left: 11px;
}

.view.on {
  background: #c8c8c8;
}

.step {
  padding: 0 3px;
}

.zoom {
  appearance: none;
  width: 94px;
  height: 12px;
  background: linear-gradient(#aaa, #aaa) center / 100% 1px no-repeat;
}

.zoom::-webkit-slider-thumb {
  appearance: none;
  width: 3px;
  height: 12px;
  background: #555;
}

.percent {
  padding-left: 10px;
}
```
